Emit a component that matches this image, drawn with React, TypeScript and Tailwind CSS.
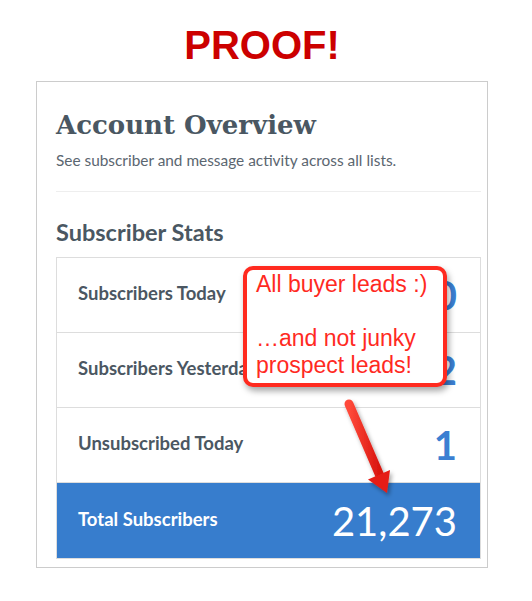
export default function App() {
  const rows = [
    { label: "Subscribers Today", value: "0" },
    { label: "Subscribers Yesterday", value: "2" },
    { label: "Unsubscribed Today", value: "1" },
  ];
  return (
    <div className="relative min-h-[601px] bg-white font-['Lato',sans-serif]">
      <div className="ml-[36px] w-[452px] pt-[25px]">
        <div className="text-center text-[40px] leading-none font-bold text-[#cc0000] font-['Liberation_Sans',Arial,sans-serif]">
          PROOF!
        </div>
        <div className="mt-[16px] border border-[#cccccc] pl-[19px] pr-[6px] pt-[27px] pb-[8px]">
          <h1 className="text-[26px] leading-[32px] font-bold text-[#4a5762] font-['DejaVu_Serif',serif]">
            Account Overview
          </h1>
          <p className="mt-[9px] text-[15.4px] leading-[20px] text-[#5b6670]">
            See subscriber and message activity across all lists.
          </p>
          <div className="mt-[21px] h-px bg-[#eeeeee]" />
          <h2 className="mt-[25px] text-[23.5px] leading-[30px] font-bold text-[#4a5762]">
            Subscriber Stats
          </h2>
          <div className="mt-[10px] border border-[#dddddd]">
            {rows.map((r) => (
              <div
                key={r.label}
                className="flex h-[75px] items-center justify-between border-b border-[#dddddd] pl-[21px] pr-[23px]"
              >
                <span className="-mt-[2px] text-[18.5px] font-bold text-[#4b5762]">{r.label}</span>
                <span className="text-[40px] font-bold leading-none text-[#3b7fd2]">{r.value}</span>
              </div>
            ))}
            <div className="flex h-[75px] items-center justify-between bg-[#377dcd] pl-[21px] pr-[23px]">
              <span className="-mt-[2px] text-[18.5px] font-bold text-white">Total Subscribers</span>
              <span className="text-[40px] leading-none text-white">21,273</span>
            </div>
          </div>
        </div>
      </div>

      <div className="absolute left-[243px] top-[266px] h-[121px] w-[204px] rounded-[10px] border-4 border-[#ff2a1f] bg-white pl-[9px] pt-[1px] text-[23px] leading-[27px] text-[#ff2a1f] shadow-[2px_4px_6px_rgba(0,0,0,0.35)] font-['Liberation_Sans',Arial,sans-serif]">
        <div>All buyer leads :)</div>
        <div>&nbsp;</div>
        <div>…and not junky</div>
        <div>prospect leads!</div>
      </div>

      <svg className="pointer-events-none absolute left-0 top-0" width="532" height="601">
        <defs>
          <linearGradient id="arr" x1="0" y1="0" x2="1" y2="0">
            <stop offset="0" stopColor="#ff4a3a" />
            <stop offset="1" stopColor="#d8140e" />
          </linearGradient>
          <filter id="sh" x="-50%" y="-50%" width="200%" height="200%">
            <feDropShadow dx="2" dy="3" stdDeviation="2" floodColor="#000" floodOpacity="0.35" />
          </filter>
        </defs>
        <g filter="url(#sh)">
          <line x1="349" y1="404" x2="380" y2="476" stroke="url(#arr)" strokeWidth="9" strokeLinecap="round" />
          <polygon points="368,479.5 390,470 387,493" fill="#e51c14" />
        </g>
      </svg>
    </div>
  );
}
